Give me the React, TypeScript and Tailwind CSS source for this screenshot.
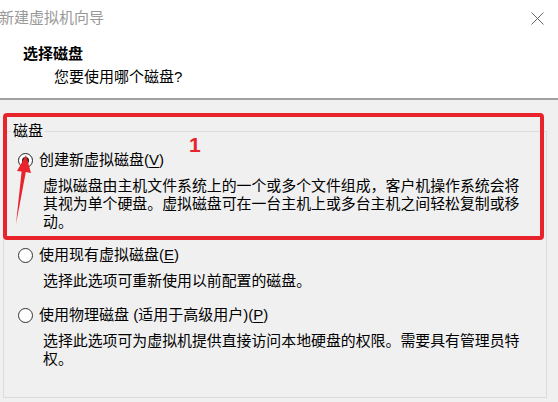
import React from "react";

const font = { fontFamily: '"Liberation Sans", "Noto Sans CJK SC", sans-serif' };

function Radio({ checked }: { checked?: boolean }) {
  return (
    <div
      className={
        checked
          ? "w-[15px] h-[15px] rounded-full border-[1.5px] border-[#222222] bg-white flex items-center justify-center shrink-0"
          : "w-[15px] h-[15px] rounded-full border border-[#333333] bg-white flex items-center justify-center shrink-0"
      }
    >
      {checked && <div className="w-[7px] h-[7px] rounded-full bg-[#222222]" />}
    </div>
  );
}

function Option({
  checked,
  label,
  mnemonic,
  lines,
  topGap,
}: {
  checked?: boolean;
  label: string;
  mnemonic: string;
  lines: string[];
  topGap: string;
}) {
  return (
    <div className={topGap}>
      <div className="flex items-center h-[18px] pl-[14px]">
        <Radio checked={checked} />
        <span className="ml-[6px] whitespace-nowrap leading-[18px]">
          {label}(<span className="underline underline-offset-2">{mnemonic}</span>)
        </span>
      </div>
      <div className="mt-[8px] pl-[39px] leading-[18px] text-[14.9px]">
        {lines.map((l, i) => (
          <div key={i} className="whitespace-nowrap">
            {l}
          </div>
        ))}
      </div>
    </div>
  );
}

export default function App() {
  return (
    <div
      className="relative w-[558px] h-[402px] bg-[#f0f0f0] overflow-hidden text-[15px] text-black"
      style={font}
    >
      <div className="h-[100px] bg-white border-b-2 border-[#a0a0a0]">
        <div className="h-[36px] flex items-center justify-between pr-[14px]">
          <span className="-ml-[1px] text-[#999999] leading-[18px]">新建虚拟机向导</span>
          <svg width="13" height="13" viewBox="0 0 13 13" className="text-[#666666]">
            <path d="M0.5 0.5 L12.5 12.5 M12.5 0.5 L0.5 12.5" stroke="currentColor" strokeWidth="1" fill="none" />
          </svg>
        </div>
        <div className="mt-[9px] pl-[23px] leading-[18px] font-bold">选择磁盘</div>
        <div className="mt-[5px] pl-[54px] leading-[18px]">您要使用哪个磁盘?</div>
      </div>

      <div className="relative ml-[3px] mt-[31px] w-[544px] h-[267px] border border-[#dcdcdc]">
        <span className="absolute -top-[10px] left-[7px] px-[2px] bg-[#f0f0f0] leading-[18px]">磁盘</span>
        <div className="pt-[19px]">
          <Option
            checked
            topGap=""
            label="创建新虚拟磁盘"
            mnemonic="V"
            lines={[
              "虚拟磁盘由主机文件系统上的一个或多个文件组成，客户机操作系统会将",
              "其视为单个硬盘。虚拟磁盘可在一台主机上或多台主机之间轻松复制或移",
              "动。",
            ]}
          />
          <Option
            topGap="mt-[15px]"
            label="使用现有虚拟磁盘"
            mnemonic="E"
            lines={["选择此选项可重新使用以前配置的磁盘。"]}
          />
          <Option
            topGap="mt-[16px]"
            label="使用物理磁盘 (适用于高级用户)"
            mnemonic="P"
            lines={[
              "选择此选项可为虚拟机提供直接访问本地硬盘的权限。需要具有管理员特",
              "权。",
            ]}
          />
        </div>
      </div>

      {/* red annotation box */}
      <div className="absolute left-[3px] top-[113px] w-[541px] h-[127px] border-[4px] border-[#e8232c] rounded-[4px] pointer-events-none" />
      <span className="absolute left-[189px] top-[134px] text-[21px] leading-none font-bold text-[#e8232c]">
        1
      </span>
      <svg className="absolute left-0 top-0 pointer-events-none" width="60" height="240" viewBox="0 0 60 240">
        <polygon
          points="26,155 31,173 25.8,172 16,224 21.6,171.5 17,171"
          fill="#e8232c"
        />
      </svg>
    </div>
  );
}
